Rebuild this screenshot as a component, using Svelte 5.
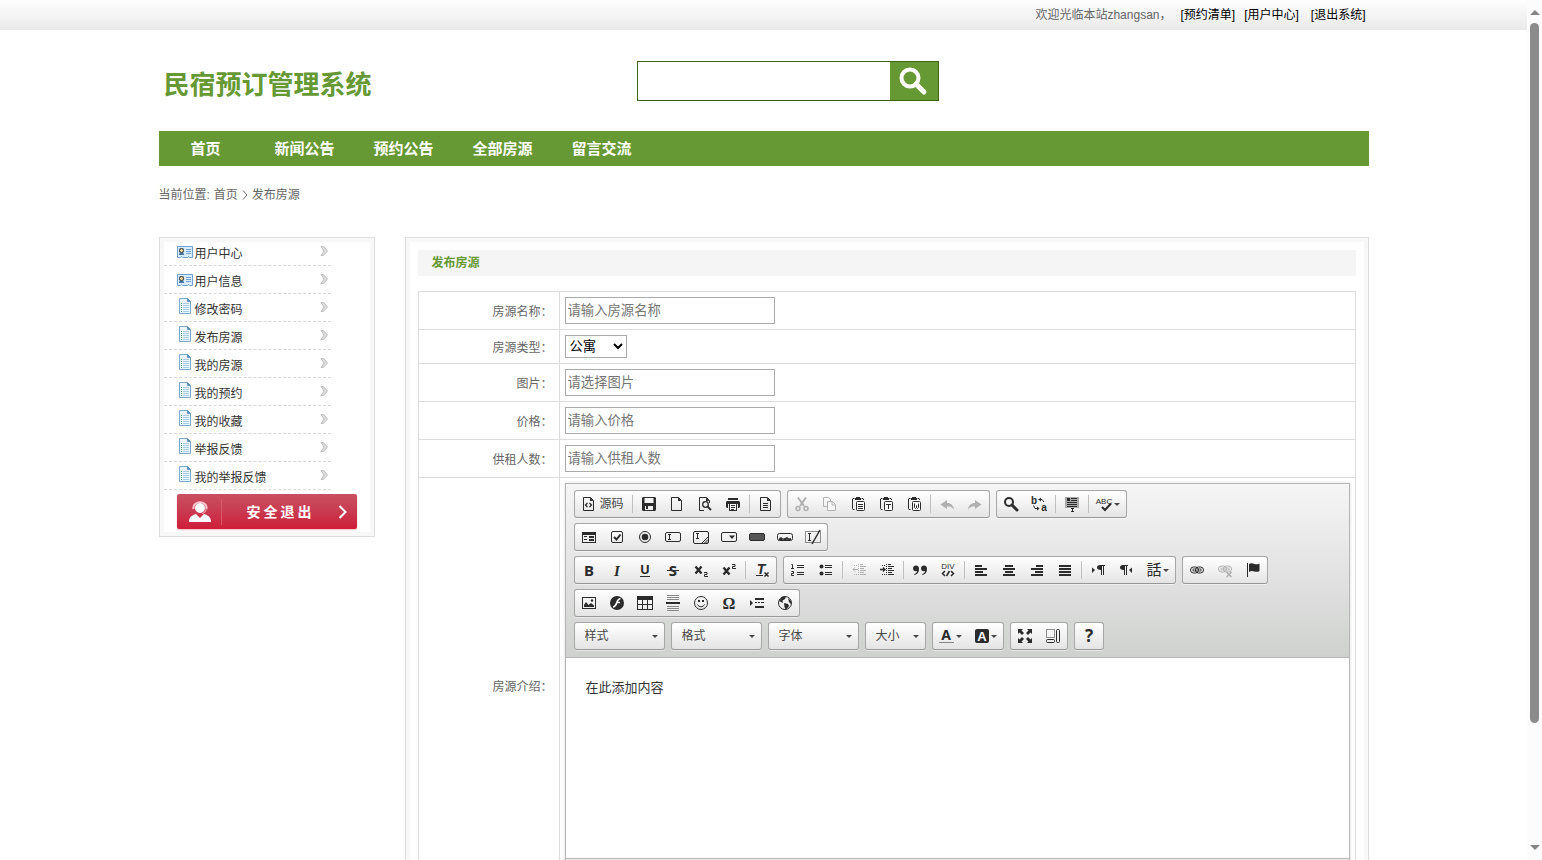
<script>
  const navItems = ['首页', '新闻公告', '预约公告', '全部房源', '留言交流'];

  const sideItems = [
    { label: '用户中心', icon: 'card' },
    { label: '用户信息', icon: 'card' },
    { label: '修改密码', icon: 'doc' },
    { label: '发布房源', icon: 'doc' },
    { label: '我的房源', icon: 'doc' },
    { label: '我的预约', icon: 'doc' },
    { label: '我的收藏', icon: 'doc' },
    { label: '举报反馈', icon: 'doc' },
    { label: '我的举报反馈', icon: 'doc' }
  ];

  const page = '<path d="M2.500 1.500h7l3 3v10h-10z" fill="none" stroke="currentColor"/><path d="M9 1.500V5h3.500z" fill="currentColor"/>';
  const clipboard = '<path d="M4.500 2.500H3L2.500 3v9.500l.5 1h1.500M11.500 2.500h1.500l.5.5v1" fill="none" stroke="currentColor"/><path d="M5 2h1V1h4v1h1v2H5z" fill="currentColor"/><rect x="6.500" y="5.500" width="8" height="9" rx="1" fill="#fff" stroke="currentColor"/>';
  const letter = (t, x, y, size, extra = 'font-weight="bold"') =>
    `<text x="${x}" y="${y}" font-size="${size}" text-anchor="middle" fill="currentColor" ${extra}>${t}</text>`;
  const noto = 'font-weight="bold" font-family="Noto Sans"';
  const bars = (rows) => rows.map(([x, y, w, h = 1]) => `<rect x="${x}" y="${y}" width="${w}" height="${h}" fill="currentColor"/>`).join('');
  const line = (d, w = 1, extra = '') => `<path d="${d}" fill="none" stroke="currentColor" stroke-width="${w}" ${extra}/>`;
  const solid = (d, extra = '') => `<path d="${d}" fill="currentColor" ${extra}/>`;
  const chain = (y) => `<rect x="1.500" y="${y}" width="8" height="6" rx="3" fill="none" stroke="currentColor"/><rect x="6.500" y="${y}" width="8" height="6" rx="3" fill="none" stroke="currentColor"/><rect x="4" y="${y + 2}" width="8" height="2" fill="none" stroke="currentColor" stroke-width=".8"/>`;

  const icons = {
    source: page + line('M6.500 7 4.500 9l2 2M8.500 7l2 2-2 2', 1.3),
    save: solid('M2 1h12l1 1v12l-1 1H2l-1-1V2zM3.500 2v5h9V2zM4 10v4h8v-4z', 'fill-rule="evenodd"') + bars([[5, 10, 2, 3]]),
    newpage: page,
    preview: '<path d="M7 14.500H2.500v-13h7l3 3V7" fill="none" stroke="currentColor"/><path d="M9 1.500V5h3.500z" fill="currentColor"/><circle cx="8.500" cy="8.500" r="2.800" fill="none" stroke="currentColor" stroke-width="1.300"/>' + line('M10.500 10.500l3.500 3.500', 1.8),
    print: bars([[3, 2, 10, 2]]) + solid('M2 5h12l1 1v5l-1 1h-1V8H3v4H2l-1-1V6z') + '<rect x="4.500" y="7.500" width="7" height="7" fill="#fff" stroke="currentColor"/>' + bars([[6, 9, 4], [6, 11, 4], [6, 13, 3]]),
    templates: page + bars([[5, 7, 5], [5, 9, 5], [5, 11, 5]]),
    cut: line('M4 1.500l6 8.500M12 1.500 6 10', 2) + '<circle cx="4" cy="12.500" r="2" fill="none" stroke="currentColor" stroke-width="1.500"/><circle cx="12" cy="12.500" r="2" fill="none" stroke="currentColor" stroke-width="1.500"/>',
    copy: line('M5 10.500H1.500v-9h5l2 2V5') + '<path d="M5.500 5.500h5l3 3v6h-8z" fill="#f8f8f8" stroke="currentColor"/><path d="M10 5.500V9h3.500" fill="none" stroke="currentColor"/>',
    paste: clipboard + bars([[8, 8, 5], [8, 10, 5], [8, 12, 5]]),
    pastetext: clipboard + bars([[8, 8, 5], [10, 8, 1, 5]]),
    pasteword: clipboard + line('M8.500 7.500v4l1 1 1-1v-2 2l1 1 1-1v-4'),
    undo: solid('M1.500 8.500 8 4v3c4 0 6.500 2.500 7 6.500-2-2.500-4-3-7-3v2.500z'),
    redo: solid('M14.500 8.500 8 4v3c-4 0-6.500 2.500-7 6.500 2-2.500 4-3 7-3v2.500z'),
    find: '<circle cx="6" cy="6" r="4" fill="none" stroke="currentColor" stroke-width="2"/>' + line('M9 9l5 5', 3, 'stroke-linecap="round"'),
    replace: letter('b', 3, 8, 10) + letter('a', 13, 15, 10) + line('M7.500 3.500h3.500l2 2.500M2.500 9.500l1.500 3h3') + solid('M7.500 3.500 10 1.500v4zM8.500 12.500 6 10.500v4z'),
    selectall: '<rect x="1" y="1" width="14" height="11" fill="#aaa"/>' + bars([[3, 2, 3, 3], [7, 2, 6], [7, 4, 6], [3, 6, 10], [3, 8, 10], [3, 10, 10], [7, 12, 3], [8, 12, 1, 4], [7, 15, 3]]),
    spell: letter('ABC', 7, 8, 8, '') + line('M5 11l3 3 6-6.500', 2),
    form: solid('M1 3h14v11H1zM2 6v7h12V6z', 'fill-rule="evenodd"') + bars([[3, 7, 3], [8, 7, 5, 2], [3, 10, 3], [8, 10, 5, 2]]),
    checkbox: '<rect x="2.500" y="2.500" width="11" height="11" rx="1.500" fill="none" stroke="currentColor"/>' + line('M5 8l2.500 2.500L11.500 5.500', 2),
    radio: '<circle cx="8" cy="8" r="5.500" fill="none" stroke="currentColor"/><circle cx="8" cy="8" r="3.300" fill="currentColor"/>',
    textfield: '<rect x=".5" y="3.500" width="15" height="9" rx="1.500" fill="none" stroke="currentColor"/>' + bars([[3, 5, 3], [4, 5, 1, 6], [3, 10, 3]]),
    textarea: '<rect x=".5" y="2.500" width="15" height="12" rx="1.500" fill="none" stroke="currentColor"/>' + bars([[3, 4, 3], [4, 4, 1, 6], [3, 9, 3]]) + line('M9 14l6-6M11.500 14l3.500-3.500M13.500 14l1.500-1.500'),
    select: '<rect x=".5" y="3.500" width="15" height="9" rx="1.500" fill="none" stroke="currentColor"/>' + solid('M8 6.500h6L11 10z'),
    button: '<rect x=".5" y="4.500" width="15" height="7" rx="1.500" fill="#555" stroke="currentColor"/>',
    imagebutton: '<rect x=".5" y="4.500" width="15" height="7" rx="2" fill="none" stroke="currentColor"/>' + solid('M2 11V9.500L4 8l2 1.500L8 9l2-1 2 1.500L14 9v2l-2 .5-2-1-2 1-2-1-2 1z'),
    hidden: '<rect x=".5" y="2.500" width="15" height="11" fill="none" stroke="currentColor" stroke-dasharray="1 1"/>' + bars([[3, 4, 3], [4, 4, 1, 7], [3, 11, 3]]) + line('M7 15 15 1', 1.5),
    bold: letter('B', 8, 14, 15, noto),
    italic: letter('I', 8, 14, 15, 'font-weight="bold" font-family="Liberation Serif" font-style="italic"'),
    underline: letter('U', 8, 12, 13, noto) + bars([[3, 14, 10]]),
    strike: letter('S', 8, 14, 15, noto) + bars([[2, 8, 12]]),
    sub: line('M2.500 4.500l6 7M8.500 4.500l-6 7', 2.4) + line('M11 10.500h3v2h-2.500v2H15'),
    sup: line('M2.500 5.500l6 7M8.500 5.500l-6 7', 2.4) + line('M11 2.500h3v2h-2.500v2H15'),
    removeformat: letter('T', 7, 12, 14, 'font-weight="bold" font-style="italic"') + bars([[2, 13, 7]]) + line('M10.500 10.500l4 4M14.500 10.500l-4 4', 1.5),
    ol: line('M2.500 6V2.500H1.500M1 6.500h3M1.500 9.500h2v2h-2v2H4') + bars([[7, 3, 7], [7, 5, 7], [7, 10, 7], [7, 12, 7]]),
    ul: '<circle cx="3.500" cy="4.500" r="2" fill="currentColor"/><circle cx="3.500" cy="11.500" r="2" fill="currentColor"/>' + bars([[7, 3, 7], [7, 5, 7], [7, 10, 7], [7, 12, 7]]),
    outdent: bars([[9, 2, 3], [9, 4, 6], [9, 6, 4], [9, 8, 6], [9, 10, 4], [9, 12, 6]]) + line('M7.500 2v12M3 3.500h4M3 12.500h4', 1, 'stroke-dasharray="1 1"') + line('M2 7.500h5M4 5.500l-2 2 2 2'),
    indent: bars([[9, 2, 3], [9, 4, 6], [9, 6, 4], [9, 8, 6], [9, 10, 4], [9, 12, 6]]) + line('M7.500 2v12M3 3.500h4M3 12.500h4', 1, 'stroke-dasharray="1 1"') + line('M1 7.500h5M4 5.500l2 2-2 2', 1.3),
    quote: solid('M4 3.500c2 0 3 1.500 3 3.500 0 3-1.500 5.500-4.500 6l-.3-1C4 11.500 5 10.500 5 9c-2.500.7-4-.7-4-2.500s1.300-3 3-3zM12 3.500c2 0 3 1.500 3 3.500 0 3-1.500 5.500-4.500 6l-.3-1c1.800-.5 2.800-1.500 2.800-3-2.500.7-4-.7-4-2.500s1.300-3 3-3z'),
    div: letter('DIV', 8, 7, 8, '') + line('M5 9l-2.500 2.500L5 14M11 9l2.500 2.500L11 14M9.500 9l-3 5', 1.5),
    left: bars([[2, 3, 7, 2], [2, 6, 12, 2], [2, 9, 8, 2], [2, 12, 12, 2]]),
    center: bars([[4, 3, 8, 2], [2, 6, 12, 2], [4, 9, 8, 2], [2, 12, 12, 2]]),
    right: bars([[7, 3, 7, 2], [2, 6, 12, 2], [6, 9, 8, 2], [2, 12, 12, 2]]),
    justify: bars([[2, 3, 12, 2], [2, 6, 12, 2], [2, 9, 12, 2], [2, 12, 12, 2]]),
    ltr: solid('M2 5.500 5 8l-3 3zM10 3h5v1h-1v9h-1V4h-1v9h-1V8C8 8 7 7 7 5.500S8 3 10 3z'),
    rtl: solid('M14 5.500 11 8l3 3zM5 3h5v1H9v9H8V4H7v9H6V8C3 8 2 7 2 5.500S3 3 5 3z'),
    language: letter('話', 8, 13, 15, 'font-family="Noto Sans CJK JP"'),
    link: chain(5),
    unlink: chain(4) + line('M9.500 10l5 5M14.500 10l-5 5', 1.6),
    flag: bars([[2, 1, 1, 14]]) + solid('M4 2c2-1.500 4-.5 5.500 0S13 2.500 14.500 1.500V9c-1.500 1-3.500 1-5 .5S6 8.500 4 10z'),
    image: solid('M1 2h14v12H1zM2 3v10h12V3z', 'fill-rule="evenodd"') + solid('M3 12v-2l2-3 2.500 3L10 8l3 2.500V12z') + '<circle cx="11" cy="5.500" r="1.200" fill="currentColor"/>',
    flash: '<circle cx="8" cy="8" r="7" fill="currentColor"/><path d="M11.500 3.500C8 4 8 8 7 9.500S5.500 12 4 12M7.500 7.500h3.500" fill="none" stroke="#fff" stroke-width="1.700"/>',
    table: solid('M0 1h16v14H0zM1 5v4h4V5zM6 5v4h4V5zM11 5v4h4V5zM1 10v4h4v-4zM6 10v4h4v-4zM11 10v4h4v-4z', 'fill-rule="evenodd"'),
    rule: '<path d="M2 .5h12M2 2.500h12M2 4.500h12M2 11.500h12M2 13.500h12M2 15.500h12" stroke="#888"/>' + bars([[1, 7, 14, 2]]),
    smiley: '<circle cx="8" cy="8" r="6.500" fill="none" stroke="currentColor"/>' + bars([[5, 5, 2, 2], [9, 5, 2, 2]]) + line('M4.500 9.500c1.500 3 5.500 3 7 0'),
    omega: letter('Ω', 8, 14, 16, 'font-weight="bold" font-family="Liberation Serif"'),
    pagebreak: solid('M1 5l3 3-3 3z') + bars([[6, 3, 9, 2], [6, 11, 9, 2], [6, 7, 2], [9, 7, 2], [12, 7, 3]]),
    globe: '<circle cx="8" cy="8" r="6.500" fill="none" stroke="currentColor"/>' + solid('M2 6l3-4 4-.5L8 4 5.500 5.500 6 8 4 7zM7 8l4 1 1 2-3 4-1.500-3zM11 3l3 3v3l-2-2z'),
    color: letter('A', 7, 12, 14, noto) + '<rect x="0" y="14" width="15" height="1" fill="#888"/>',
    bgcolor: '<rect x="1" y="1" width="14" height="14" rx="2" fill="currentColor"/><text x="8" y="13" font-size="13" font-weight="bold" text-anchor="middle" fill="#fff">A</text>',
    maximize: solid('M1 1h5L4.500 2.500 7 5 5 7 2.500 4.500 1 6zM15 1v5l-1.500-1.500L11 7 9 5l2.500-2.500L10 1zM1 15v-5l1.500 1.500L5 9l2 2-2.500 2.500L6 15zM15 15h-5l1.500-1.500L9 11l2-2 2.500 2.500L15 10z'),
    blocks: '<rect x="1.500" y="1.500" width="8" height="8" fill="none" stroke="currentColor" stroke-dasharray="1 1"/><rect x="11.500" y="1.500" width="3" height="13" rx="1" fill="none" stroke="currentColor"/><rect x="1.500" y="11.500" width="8" height="3" rx="1" fill="none" stroke="currentColor"/>',
    about: letter('?', 8, 14, 17, noto)
  };

  // "|" marks a divider inside a group, "~" a disabled tool, "+" a tool with a menu
  const toolRows = [
    ['source | save newpage preview print | templates', '~cut ~copy paste pastetext pasteword | ~undo ~redo', 'find replace | selectall | spell+'],
    ['form checkbox radio textfield textarea select button imagebutton hidden'],
    ['bold italic underline strike sub sup | removeformat', 'ol ul | ~outdent indent | quote div | left center right justify | ltr rtl language+', 'link ~unlink flag'],
    ['image flash table rule smiley omega pagebreak globe'],
    ['color+ bgcolor+', 'maximize blocks', 'about']
  ].map((row) =>
    row.map((group) =>
      group.split(' ').map((t) => ({
        sep: t === '|',
        off: t.startsWith('~'),
        menu: t.endsWith('+'),
        name: t.replace(/[~+]/g, '')
      }))
    )
  );

  const combos = [
    { label: '样式', small: false },
    { label: '格式', small: false },
    { label: '字体', small: false },
    { label: '大小', small: true }
  ];
</script>

<div class="window">
  <div class="scroller">
    <div class="topbar">
      <div class="wrap welcome">
        <span>欢迎光临本站zhangsan，</span>
        <a href="#orders">[预约清单]</a>
        <a href="#user">[用户中心]</a>
        <a class="leave" href="#logout">[退出系统]</a>
      </div>
    </div>

    <div class="wrap">
      <header>
        <h1>民宿预订管理系统</h1>
        <form class="search">
          <input type="text" aria-label="搜索" />
          <button type="button" aria-label="搜索">
            <svg width="30" height="30" viewBox="0 0 30 30" fill="none" stroke="#fff" stroke-width="4">
              <circle cx="12" cy="12" r="8.500" />
              <path d="M18 18l8 8" stroke-width="5" stroke-linecap="round" />
            </svg>
          </button>
        </form>
      </header>

      <nav class="main-nav">
        {#each navItems as item}
          <a href="#nav">{item}</a>
        {/each}
      </nav>

      <div class="crumbs">
        <span>当前位置:</span>
        <a href="#home">首页</a>
        <svg width="6" height="10" viewBox="0 0 6 10" fill="none" stroke="#666"><path d="M1 .5 5 5 1 9.500" /></svg>
        <span>发布房源</span>
      </div>

      <div class="columns">
        <aside>
          <ul>
            {#each sideItems as item}
              <li>
                <a href="#side">
                  {#if item.icon === 'card'}
                    <svg class="card" width="16" height="12" viewBox="0 0 16 12">
                      <path d="M.5.5h15v11h-3l-1-1-1 1h-5l-1-1-1 1h-3z" fill="#d9ecfb" stroke="#6d9fd0" />
                      <rect x="2" y="2" width="5" height="7" fill="#8fb8de" />
                      <circle cx="4.500" cy="4.500" r="2" fill="#f4d9a8" stroke="#3b3320" />
                      <path d="M2 9c.5-3 4.500-3 5 0z" fill="#41719f" />
                      <path d="M9 3.500h5M9 5.500h5M9 7.500h5" stroke="#74a4d4" />
                    </svg>
                  {:else}
                    <svg class="doc" width="12" height="16" viewBox="0 0 12 16">
                      <path d="M.5.5h8l3 3v12H.5z" fill="#eaf5fd" stroke="#78a8cc" />
                      <path d="M8.500.5v3h3z" fill="#5f93bb" stroke="#5f93bb" />
                      <path d="M4 5.500h6M4 7.500h6M4 9.500h6M4 11.500h6M4 13.500h6" stroke="#a9cbe4" />
                      <path d="M2 5.500h1M2 7.500h1M2 9.500h1M2 11.500h1M2 13.500h1" stroke="#3fa06a" />
                    </svg>
                  {/if}
                  <span>{item.label}</span>
                  <svg class="arrow" width="8" height="10" viewBox="0 0 8 10">
                    <path d="M1 .5h2.500L7.500 5l-4 4.500H1L4 5z" fill="#ddd" stroke="#b5b5b5" stroke-width=".8" />
                  </svg>
                </a>
              </li>
            {/each}
          </ul>
          <button class="logout" type="button">
            <svg width="22" height="22" viewBox="0 0 22 22">
              <circle cx="11" cy="7" r="5" fill="#fff" />
              <path d="M4.500 8C3 -1 19 -1 17.500 8" fill="none" stroke="#ffc4cc" stroke-width="2" />
              <path d="M0 21c0-5 3-7 7-8l4 4 4-4c4 1 7 3 7 8z" fill="#fff" />
              <path d="M17 8c0 3-2 4-4 4.500" fill="none" stroke="#ffc4cc" />
            </svg>
            <span>安全退出</span>
            <svg width="9" height="14" viewBox="0 0 9 14" fill="none" stroke="#fff" stroke-width="2"><path d="M1.500 1l6 6-6 6" /></svg>
          </button>
        </aside>

        <main>
          <h2>发布房源</h2>
          <table>
            <tbody>
              <tr>
                <th><label for="name">房源名称：</label></th>
                <td><input id="name" type="text" placeholder="请输入房源名称" /></td>
              </tr>
              <tr>
                <th><label for="type">房源类型：</label></th>
                <td><select id="type" class="kind"><option>公寓</option></select></td>
              </tr>
              <tr>
                <th><label for="picture">图片：</label></th>
                <td><input id="picture" type="text" placeholder="请选择图片" /></td>
              </tr>
              <tr>
                <th><label for="price">价格：</label></th>
                <td><input id="price" type="text" placeholder="请输入价格" /></td>
              </tr>
              <tr>
                <th><label for="people">供租人数：</label></th>
                <td><input id="people" type="text" placeholder="请输入供租人数" /></td>
              </tr>
              <tr>
                <th><label for="intro">房源介绍：</label></th>
                <td>
                  <div class="editor">
                    <div class="toolbar">
                      {#each toolRows as row, r}
                        <div class="tool-row">
                          {#if r === 4}
                            {#each combos as combo}
                              <span class="group combo" class:small={combo.small}>
                                <select aria-label={combo.label}><option>{combo.label}</option></select>
                                <i class="caret"></i>
                              </span>
                            {/each}
                          {/if}
                          {#each row as group}
                            <span class="group">
                              {#each group as tool}
                                {#if tool.sep}
                                  <i class="sep"></i>
                                {:else}
                                  <button type="button" class="tool" disabled={tool.off} aria-label={tool.name}>
                                    <svg width="16" height="16" viewBox="0 0 16 16">{@html icons[tool.name]}</svg>
                                    {#if tool.name === 'source'}<span class="tool-text">源码</span>{/if}
                                    {#if tool.menu}<i class="caret"></i>{/if}
                                  </button>
                                {/if}
                              {/each}
                            </span>
                          {/each}
                        </div>
                      {/each}
                    </div>
                    <textarea id="intro" value="在此添加内容"></textarea>
                    <div class="status"></div>
                  </div>
                </td>
              </tr>
            </tbody>
          </table>
        </main>
      </div>
    </div>
  </div>

  <div class="scrollbar" aria-hidden="true">
    <i class="up"></i>
    <i class="thumb"></i>
    <i class="down"></i>
  </div>
</div>

<style>
  :global(body) {
    background: #fff;
    color: #666;
    font: 12px/20px "Liberation Sans", "Noto Sans CJK SC", sans-serif;
  }
  * {
    box-sizing: border-box;
  }
  a {
    color: inherit;
    text-decoration: none;
  }
  button,
  input,
  select,
  textarea {
    margin: 0;
    font-family: inherit;
  }
  svg {
    display: block;
    flex: none;
    overflow: visible;
  }

  .window {
    display: flex;
    height: 100vh;
    overflow: hidden;
  }
  .scroller {
    flex: 1;
    min-width: 0;
    overflow-y: auto;
    scrollbar-width: none;
  }
  .scrollbar {
    display: flex;
    flex-direction: column;
    align-items: center;
    width: 15px;
    padding: 10px 0;
    background: #fcfcfc;
  }
  .up,
  .down {
    border: 5px solid transparent;
  }
  .up {
    border-top: 0;
    border-bottom-color: #858585;
  }
  .down {
    margin-top: auto;
    border-bottom: 0;
    border-top-color: #858585;
  }
  .thumb {
    width: 9px;
    height: calc(100% * 5 / 6);
    margin-top: 8px;
    border-radius: 5px;
    background: #8b8b8b;
  }

  .wrap {
    max-width: 1210px;
    margin: 0 auto;
  }
  .topbar {
    height: 30px;
    background: linear-gradient(#fff, #e9e9e9);
  }
  .welcome {
    display: flex;
    justify-content: flex-end;
    gap: 9px;
    padding-right: 3px;
    line-height: 30px;
  }
  .welcome a {
    color: #000;
  }
  .welcome .leave {
    margin-left: 3px;
  }

  header {
    display: grid;
    grid-template-columns: 478px 302px;
    padding: 31px 0 26px;
  }
  h1 {
    margin: 0;
    padding: 4px 0 0 5px;
    color: #693;
    font-size: 26px;
    line-height: 40px;
  }
  .search {
    display: flex;
    height: 40px;
    border: 1px solid #3b6413;
  }
  .search input {
    flex: 1;
    min-width: 0;
    padding: 0 8px;
    border: 0;
    font-size: 14px;
  }
  .search button {
    width: 48px;
    padding: 3px 8px;
    border: 0;
    background: #693;
  }

  .main-nav {
    display: flex;
    height: 35px;
    background: #693;
  }
  .main-nav a {
    width: 99px;
    padding-right: 5px;
    color: #fff;
    font-size: 15px;
    font-weight: bold;
    line-height: 35px;
    text-align: center;
  }

  .crumbs {
    display: flex;
    align-items: center;
    gap: 4px;
    height: 58px;
    margin-bottom: 13px;
  }

  .columns {
    display: flex;
    align-items: flex-start;
    gap: 30px;
  }
  aside,
  main {
    border: 1px solid #ddd;
    box-shadow: inset 0 0 0 4px #f8f8f8;
  }
  aside {
    width: 216px;
    padding: 0 4px 7px;
  }
  ul {
    width: 167px;
    margin: 0;
    padding: 0;
    list-style: none;
  }
  li {
    height: 28px;
    border-bottom: 1px dashed #d8d8d8;
  }
  li a {
    display: flex;
    padding: 0 3px 0 13px;
    color: #333;
    line-height: 32px;
  }
  li .card {
    margin: 8px 2px 0 0;
  }
  li .doc {
    margin: 4px 4px 0 2px;
  }
  li .arrow {
    margin: 8px 0 0 auto;
  }
  .logout {
    display: flex;
    align-items: center;
    width: 180px;
    height: 35px;
    margin: 4px 0 0 13px;
    padding: 0 10px 0 12px;
    border: 0;
    border-radius: 2px;
    background: linear-gradient(#c9505f, #c93a50 50%, #cf1d39);
    box-shadow: 0 1px 2px #f3b9c0;
    color: #fff;
  }
  .logout span {
    flex: 1;
    margin-left: 10px;
    padding-left: 25px;
    border-left: 1px solid #d9586a;
    font-size: 14px;
    font-weight: bold;
    line-height: 26px;
    letter-spacing: 3px;
    text-align: left;
  }

  main {
    flex: 1;
    min-width: 0;
    padding: 12px;
  }
  h2 {
    margin: 0 0 15px;
    padding-left: 14px;
    background: #f5f5f5;
    color: #693;
    font-size: 12px;
    line-height: 26px;
  }
  table {
    width: 100%;
    border-collapse: collapse;
  }
  th,
  td {
    padding: 5px;
    border: 1px solid #ddd;
    vertical-align: middle;
  }
  th {
    width: 141px;
    padding: 4px 6px 2px;
    font-weight: normal;
    text-align: right;
  }
  td input {
    display: block;
    width: 210px;
    height: 27px;
    padding: 1px 2px;
    border: 1px solid #aaa;
  }
  .kind {
    display: block;
    width: 62px;
    height: 23px;
    padding: 0;
    border: 1px solid #aaa;
    border-radius: 0;
    background: #fff;
    color: #000;
  }

  .editor {
    border: 1px solid #b6b6b6;
    box-shadow: 0 0 3px rgba(0, 0, 0, 0.15);
  }
  .toolbar {
    padding: 6px 8px 2px;
    border-bottom: 1px solid #b6b6b6;
    background: linear-gradient(#f5f5f5, #cfd1cf);
  }
  .tool-row {
    display: flex;
    gap: 6px;
    margin-bottom: 5px;
  }
  .group {
    display: flex;
    align-items: center;
    height: 28px;
    border: 1px solid #a6a6a6;
    border-bottom-color: #979797;
    border-radius: 3px;
    background: linear-gradient(#fff, #e4e4e4);
    box-shadow: 0 1px 0 rgba(255, 255, 255, 0.5);
  }
  .tool {
    display: flex;
    align-items: center;
    height: 26px;
    padding: 0 6px;
    border: 0;
    background: none;
    color: #2b2b2b;
    font-size: 12px;
  }
  .tool:disabled {
    color: #b0b0b0;
  }
  .tool-text {
    padding-left: 3px;
    color: #484848;
    line-height: 16px;
  }
  .sep {
    width: 1px;
    height: 18px;
    margin: 0 2px;
    background: #c0c0c0;
  }
  .caret {
    border: 3px solid transparent;
    border-top-color: #474747;
    border-bottom: 0;
  }
  .tool .caret {
    margin-left: 1px;
  }
  .combo {
    width: 91px;
    padding-right: 6px;
  }
  .combo.small {
    width: 61px;
  }
  .combo select {
    flex: 1;
    min-width: 0;
    height: 26px;
    padding: 0 0 0 10px;
    border: 0;
    background: none;
    color: #474747;
    font-size: 12px;
    appearance: none;
  }
  textarea {
    display: block;
    width: 100%;
    height: 200px;
    padding: 20px;
    border: 0;
    background: #fff;
    color: #333;
    font-size: 13px;
    line-height: 20px;
    resize: none;
  }
  .status {
    height: 30px;
    border-top: 1px solid #b6b6b6;
    background: linear-gradient(#ebebeb, #cfd1cf);
  }
</style>
